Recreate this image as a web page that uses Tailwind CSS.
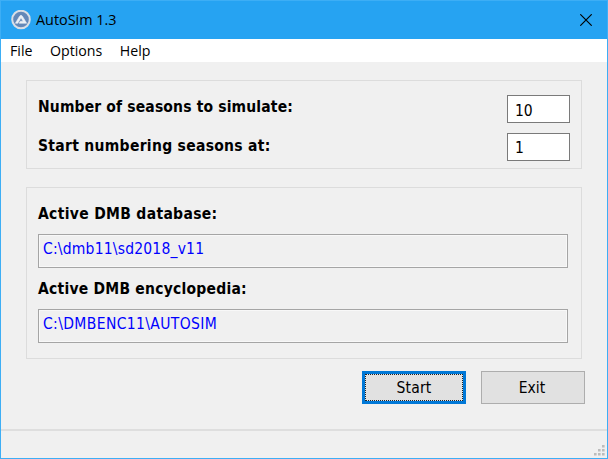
<!DOCTYPE html>
<html lang="en">
<head>
<meta charset="utf-8">
<title>AutoSim 1.3</title>
<script src="https://cdn.jsdelivr.net/npm/@tailwindcss/browser@4"></script>
</head>
<body class="w-[608px] h-[459px] overflow-hidden">
<div class="w-[608px] h-[459px] flex flex-col bg-[#f0f0f0] border border-t-0 border-[#3daef5] text-black font-['DejaVu_Sans_Condensed','DejaVu_Sans',sans-serif] whitespace-nowrap">
  <header class="h-[39px] shrink-0 flex items-center bg-[#26a3f2] border-t border-[#3daef5] pl-[10px] pr-[15px] font-['Open_Sans',sans-serif]">
    <svg class="size-5 shrink-0" viewBox="0 0 20 20">
      <circle cx="10" cy="9.5" r="8.8" fill="#6488b8" stroke="#d9dee5" stroke-width="2"/>
      <path d="M4.4 13.2 8.6 6.2Q10 4.4 11.4 6.2L15.6 13.2H8.2L9.4 11.2H12.2L10 7.8 6.8 13.2Z" fill="#edf1f6" stroke="#edf1f6" stroke-width=".6" stroke-linejoin="round"/>
    </svg>
    <h1 class="ml-[5px] grow text-[14.4px] leading-5">AutoSim 1.3</h1>
    <svg class="size-3 shrink-0" viewBox="0 0 12 12"><path d="M.3.3 11.7 11.7M11.7.3.3 11.7" stroke="#000" stroke-width="1.15"/></svg>
  </header>
  <nav class="h-[23px] shrink-0 flex items-center gap-[17.5px] bg-white pl-[9px] text-[14.2px] font-['Open_Sans',sans-serif]">
    <span>File</span><span>Options</span><span>Help</span>
  </nav>
  <main class="h-[367px] shrink-0 pl-[25px] pt-[18px]">
    <section class="w-[556px] h-[89px] border border-[#dcdcdc] pl-[11px] pr-[11px] pt-[14px] flex flex-col gap-[10px]">
      <div class="flex justify-between h-[28px]">
        <label class="text-[15.5px] font-bold leading-[25px] tracking-[0.15px]">Number of seasons to simulate:</label>
        <div class="w-[63px] h-[28px] border border-[#7a7a7a] bg-white pl-[7px] pt-[4px] text-[15.5px] leading-[22px]">10</div>
      </div>
      <div class="flex justify-between h-[28px]">
        <label class="text-[15.5px] font-bold leading-[26px] tracking-[0.3px]">Start numbering seasons at:</label>
        <div class="w-[63px] h-[28px] border border-[#7a7a7a] bg-white pl-[7px] pt-[3px] text-[15.5px] leading-[22px]">1</div>
      </div>
    </section>
    <section class="mt-[18px] w-[556px] h-[172px] border border-[#dcdcdc] pl-[11px] pt-[14px]">
      <h2 class="h-[32px] text-[15.5px] font-bold leading-[25px] tracking-[0.32px]">Active DMB database:</h2>
      <div class="w-[530px] h-[34px] border border-[#a5a5a5] shadow-[inset_0_0_0_1px_#f8f8f8] pl-[4px] pt-[3px] text-[15.5px] leading-[22px] tracking-[0.2px] text-[#0000ff]">C:\dmb11\sd2018_v11</div>
      <h2 class="h-[41px] pt-[9px] text-[15.5px] font-bold leading-[25px] tracking-[0.23px]">Active DMB encyclopedia:</h2>
      <div class="w-[530px] h-[34px] border border-[#a5a5a5] shadow-[inset_0_0_0_1px_#f8f8f8] pl-[4px] pt-[3px] text-[15.5px] leading-[22px] tracking-[0.37px] text-[#0000ff]">C:\DMBENC11\AUTOSIM</div>
    </section>
    <div class="mt-[12px] pl-[336px] flex gap-[15px]">
      <div class="w-[104px] h-[33px] border-3 border-[#0078d7] bg-[#e1e1e1]"><div class="h-full border border-dotted border-[#222] flex items-center justify-center pt-[2px] text-[15.5px] tracking-[0.15px]">Start</div></div>
      <div class="w-[104px] h-[33px] border border-[#adadad] bg-[#e1e1e1] flex items-center justify-center pt-[2px] pr-[2px] text-[15.5px]">Exit</div>
    </div>
  </main>
  <footer class="grow border-t-2 border-[#dedede] flex items-end justify-end pr-[2px] pb-[2px]">
    <svg class="size-[11px]" viewBox="0 0 11 11" fill="#bcbcbc"><path d="M8 0h2.6v2.6h-2.6zM4 4h2.6v2.6h-2.6zM8 4h2.6v2.6h-2.6zM0 8h2.6v2.6h-2.6zM4 8h2.6v2.6h-2.6zM8 8h2.6v2.6h-2.6z"/></svg>
  </footer>
</div>
</body>
</html>
